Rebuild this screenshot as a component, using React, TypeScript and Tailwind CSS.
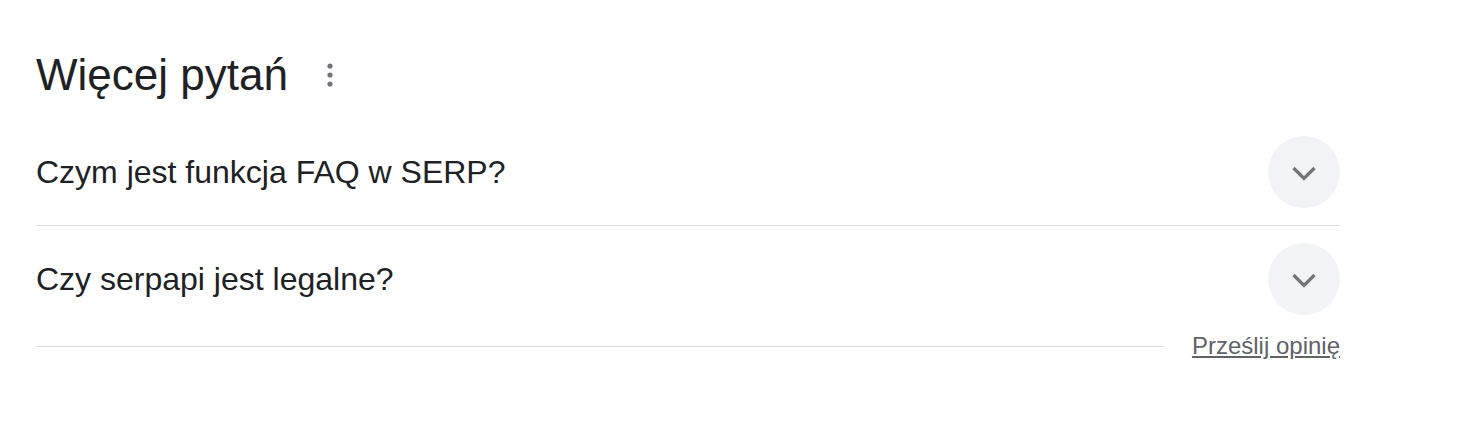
const questions = ["Czym jest funkcja FAQ w SERP?", "Czy serpapi jest legalne?"];

function Chevron() {
  return (
    <svg width="26" height="16" viewBox="0 0 26 16" fill="none">
      <path d="M2.5 3l10.5 10.5L23.5 3" stroke="#70757a" strokeWidth="3.2" />
    </svg>
  );
}

function Dots() {
  return (
    <svg width="10" height="28" viewBox="0 0 10 28" fill="#70757a">
      <circle cx="5" cy="5" r="2.6" />
      <circle cx="5" cy="14" r="2.6" />
      <circle cx="5" cy="23" r="2.6" />
    </svg>
  );
}

export default function App() {
  return (
    <div className="min-h-screen bg-white font-['Liberation_Sans',Arial,sans-serif] text-[#202124]">
      <div className="ml-[36px] w-[1304px] pt-[49px]">
        <div className="flex items-center mb-[18px] h-[52px]">
          <h2 className="text-[44px] leading-[52px]">Więcej pytań</h2>
          <button className="ml-[37px] flex items-center justify-center">
            <Dots />
          </button>
        </div>

        {questions.map((q, i) => (
          <div
            key={q}
            className={
              i === 0
                ? "flex items-center justify-between py-[17px] border-b border-[#dadce0]"
                : "flex items-center justify-between py-[17px]"
            }
          >
            <span className="text-[32px] leading-[40px]">{q}</span>
            <div className="w-[72px] h-[72px] rounded-full bg-[#f1f3f4] flex items-center justify-center pt-[2px]">
              <Chevron />
            </div>
          </div>
        ))}

        <div className="flex items-center h-[28px]">
          <div className="flex-1 h-px bg-[#dadce0]" />
          <a href="#" className="ml-[28px] text-[24px] leading-[28px] text-[#5f6368] underline">
            Prześlij opinię
          </a>
        </div>
      </div>
    </div>
  );
}
